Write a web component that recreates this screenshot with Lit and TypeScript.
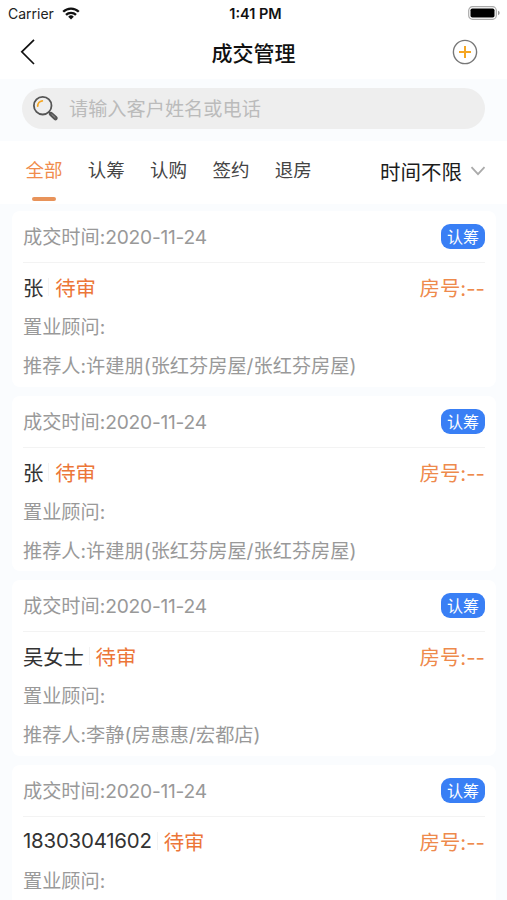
import { LitElement, html, css, nothing } from "lit";
import { customElement, property, state } from "lit/decorators.js";
import { classMap } from "lit/directives/class-map.js";

interface Deal {
  name: string;
  date: string;
  referrer?: string;
}

const DEALS: Deal[] = [
  { name: "张", date: "2020-11-24", referrer: "许建朋(张红芬房屋/张红芬房屋)" },
  { name: "张", date: "2020-11-24", referrer: "许建朋(张红芬房屋/张红芬房屋)" },
  { name: "吴女士", date: "2020-11-24", referrer: "李静(房惠惠/宏都店)" },
  { name: "18303041602", date: "2020-11-24" },
];

const TABS = ["全部", "认筹", "认购", "签约", "退房"];

@customElement("deal-card")
class DealCard extends LitElement {
  @property({ attribute: false }) deal!: Deal;

  static styles = css`
    :host {
      display: block;
      box-sizing: border-box;
      height: 175.5px;
      padding: 0 11px;
      border-radius: 8px;
      background: #fff;
      white-space: nowrap;
    }
    .head {
      display: flex;
      align-items: center;
      justify-content: space-between;
      box-sizing: border-box;
      height: 52px;
      border-bottom: 1.5px solid #f3f3f3;
      color: #999;
      font-size: 19.2px;
    }
    .head > span:first-child {
      padding-bottom: 1px;
    }
    .date {
      letter-spacing: -0.25px;
    }
    .badge {
      display: flex;
      align-items: center;
      justify-content: center;
      box-sizing: border-box;
      width: 44px;
      height: 25px;
      padding-bottom: 1px;
      border-radius: 9px;
      background: #397ff5;
      color: #fff;
      font-size: 16px;
    }
    .main {
      display: flex;
      align-items: center;
      height: 48px;
      padding-bottom: 2px;
      color: #333;
      font-size: 20.4px;
    }
    .name {
      letter-spacing: -0.2px;
    }
    .bar {
      width: 1px;
      height: 18px;
      margin: 0 6px 0 5px;
      background: #f3f3f3;
    }
    .status {
      color: #ec7638;
    }
    .room {
      margin-left: auto;
      color: #ee8a4c;
    }
    .line {
      height: 39px;
      line-height: 29px;
      color: #999;
      font-size: 19.2px;
    }
  `;

  render() {
    const d = this.deal;
    return html`
      <div class="head">
        <span>成交时间:<span class="date">${d.date}</span></span>
        <span class="badge">认筹</span>
      </div>
      <div class="main">
        <span class="name">${d.name}</span><i class="bar"></i>
        <span class="status">待审</span>
        <span class="room">房号:--</span>
      </div>
      <div class="line">置业顾问:</div>
      ${d.referrer ? html`<div class="line">推荐人:${d.referrer}</div>` : nothing}
    `;
  }
}

@customElement("app-root")
class AppRoot extends LitElement {
  @state() private active = 0;

  static styles = css`
    :host {
      display: flex;
      flex-direction: column;
      width: 507px;
      height: 900px;
      overflow: hidden;
      background: #fafcfe;
      font-family: Inter, "Noto Sans CJK SC", sans-serif;
    }
    .statusbar {
      display: grid;
      grid-template-columns: 1fr auto 1fr;
      align-items: center;
      flex: none;
      height: 27px;
      padding: 0 7px 0 8px;
      background: #fff;
      color: #222;
      font-size: 14px;
    }
    .carrier {
      display: flex;
      align-items: center;
      gap: 8px;
    }
    .carrier svg {
      margin-bottom: 1px;
    }
    .clock {
      padding-left: 3px;
      color: #111;
      font-size: 14.5px;
      font-weight: 600;
    }
    .battery {
      justify-self: end;
      margin-bottom: 1px;
    }
    svg {
      display: block;
    }
    .nav {
      display: grid;
      grid-template-columns: 1fr auto 1fr;
      align-items: center;
      box-sizing: border-box;
      flex: none;
      height: 52px;
      padding: 0 29px 2px;
      background: #fff;
    }
    .back {
      margin-left: -9px;
    }
    .title {
      color: #111;
      font-size: 21px;
      font-weight: 500;
    }
    .add {
      justify-self: end;
    }
    .searchwrap {
      flex: none;
      padding: 9px 22px 12px;
    }
    .search {
      display: flex;
      align-items: center;
      height: 41px;
      padding-left: 10px;
      gap: 10px;
      border-radius: 21px;
      background: #eee;
      color: #bbb;
      font-size: 19.2px;
    }
    .search span {
      padding-bottom: 2px;
    }
    .filters {
      display: flex;
      flex: none;
      box-sizing: border-box;
      height: 63px;
      padding: 0 21px 0 25.5px;
      background: #fff;
    }
    .tabs {
      display: flex;
      gap: 25.3px;
    }
    .tab {
      display: flex;
      flex-direction: column;
      align-items: center;
      width: 37px;
      color: #444;
      font-size: 18.5px;
      line-height: 59px;
    }
    .tab.active {
      color: #f08c4c;
    }
    .tab.active::after {
      content: "";
      width: 24px;
      height: 4px;
      margin-top: -3px;
      border-radius: 2px;
      background: #e8935a;
    }
    .period {
      display: flex;
      align-items: center;
      gap: 8px;
      height: 59px;
      margin-left: auto;
      color: #1c1c1c;
      font-size: 20.5px;
    }
    .list {
      display: flex;
      flex-direction: column;
      gap: 9px;
      padding: 7px 11px 0 12px;
    }
    deal-card {
      flex: none;
    }
  `;

  render() {
    return html`
      <div class="statusbar">
        <div class="carrier">
          <span>Carrier</span>
          <svg width="18" height="13" viewBox="0 0 18 13" fill="none" stroke="#111" stroke-width="2.3">
            <path d="M1.2 4.8a11 11 0 0 1 15.6 0" />
            <path d="M4 7.9a7 7 0 0 1 10 0" />
            <path d="M9 12.4 6.2 9.7a4 4 0 0 1 5.6 0Z" fill="#111" stroke="none" />
          </svg>
        </div>
        <span class="clock">1:41 PM</span>
        <svg class="battery" width="32" height="14" viewBox="0 0 32 14">
          <rect x="0.7" y="0.7" width="27.6" height="12.6" rx="3.8" fill="#fff" stroke="#aaa" stroke-width="1.2" />
          <rect x="2.5" y="2.5" width="24" height="9" rx="1.8" />
          <path d="M30 4.8q1.7.6 1.7 2.2T30 9.2Z" fill="#999" />
        </svg>
      </div>
      <div class="nav">
        <svg class="back" width="16" height="26" viewBox="0 0 16 26" fill="none" stroke="#111" stroke-width="1.7">
          <path d="M14 .8 1.8 12.8 14 25" />
        </svg>
        <span class="title">成交管理</span>
        <svg class="add" width="26" height="26" viewBox="0 0 26 26" fill="none">
          <circle cx="13" cy="13" r="11.6" stroke="#777" stroke-width="1.4" />
          <path d="M7 13h12M13 7v12" stroke="#f5a623" stroke-width="2" />
        </svg>
      </div>
      <div class="searchwrap">
        <div class="search">
          <svg width="27" height="27" viewBox="0 0 27 27" fill="none" stroke-linecap="round">
            <circle cx="10.7" cy="10.7" r="8.8" stroke="#555" stroke-width="1.8" />
            <path d="M5.7 11a5.2 5.2 0 0 1 4.6-5.2" stroke="#f5a623" stroke-width="1.8" />
            <path d="m17.2 17.2 2.2 2.2" stroke="#555" stroke-width="2" />
            <path d="m19 19 4.5 4.2" stroke="#555" stroke-width="4.4" />
            <path d="m19.8 19.5 3.3 3" stroke="#999" stroke-width="1" />
          </svg>
          <span>请输入客户姓名或电话</span>
        </div>
      </div>
      <div class="filters">
        <div class="tabs">
          ${TABS.map(
            (t, i) => html`<div
              class=${classMap({ tab: true, active: i === this.active })}
              @click=${() => (this.active = i)}
            >${t}</div>`
          )}
        </div>
        <div class="period">
          <span>时间不限</span>
          <svg width="16" height="10" viewBox="0 0 16 10" fill="none" stroke="#aaa" stroke-width="1.8">
            <path d="m1.5 1.2 6.5 7 6.5-7" />
          </svg>
        </div>
      </div>
      <div class="list">
        ${DEALS.map((d) => html`<deal-card .deal=${d}></deal-card>`)}
      </div>
    `;
  }
}
